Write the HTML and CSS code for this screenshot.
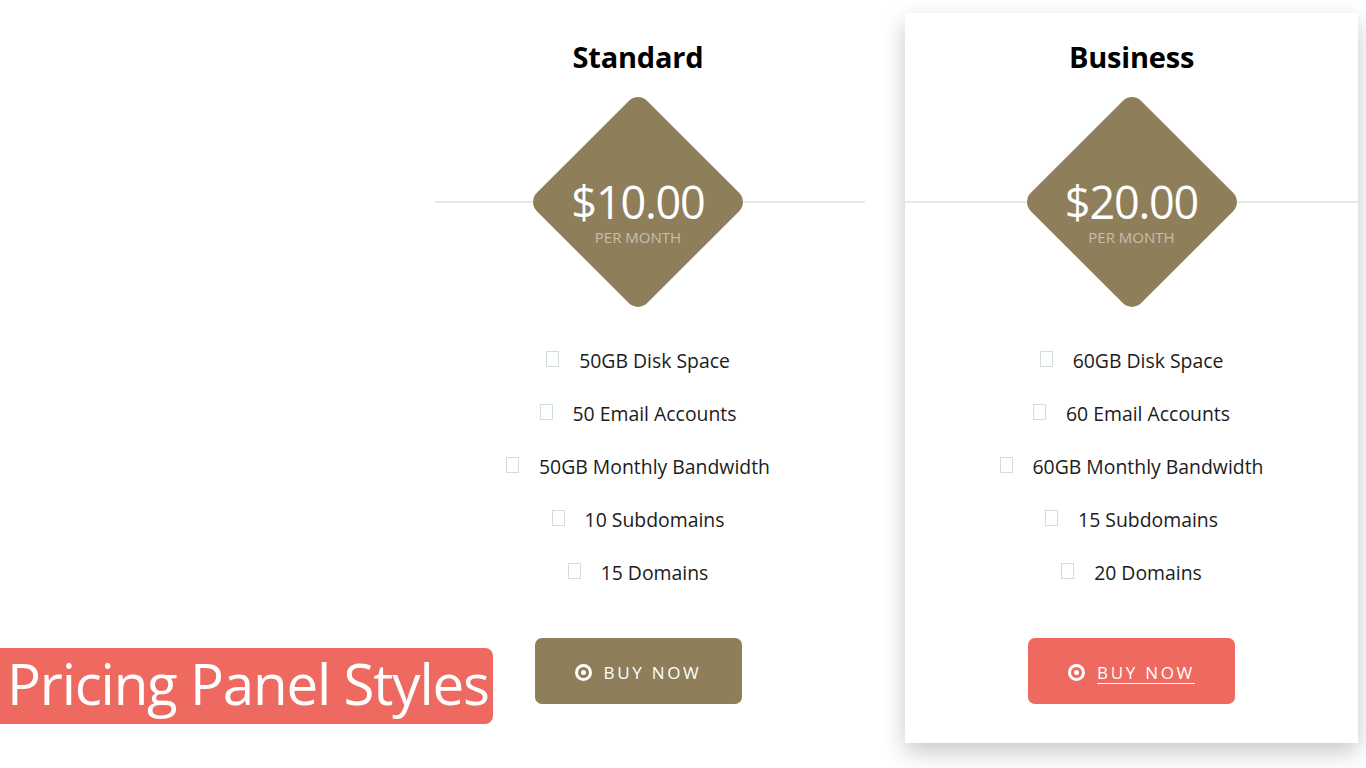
FILE: index.html
```html
<!DOCTYPE html>
<html lang="en">
<head>
<meta charset="utf-8">
<title>Pricing Panel Styles</title>
<link rel="stylesheet" href="styles.css">
</head>
<body>
<main class="pricing">
  <section class="card card-standard">
    <h2 class="card-title">Standard</h2>
    <div class="price-row">
      <div class="diamond">
        <span class="price">$10.00</span>
        <span class="period">PER MONTH</span>
      </div>
    </div>
    <ul class="features">
      <li><span class="box"></span>50GB Disk Space</li>
      <li><span class="box"></span>50 Email Accounts</li>
      <li><span class="box"></span>50GB Monthly Bandwidth</li>
      <li><span class="box"></span>10 Subdomains</li>
      <li><span class="box"></span>15 Domains</li>
    </ul>
    <a class="buy" href="#"><span class="target"></span><span class="buy-text">BUY NOW</span></a>
  </section>
  <section class="card card-business">
    <h2 class="card-title">Business</h2>
    <div class="price-row">
      <div class="diamond">
        <span class="price">$20.00</span>
        <span class="period">PER MONTH</span>
      </div>
    </div>
    <ul class="features">
      <li><span class="box"></span>60GB Disk Space</li>
      <li><span class="box"></span>60 Email Accounts</li>
      <li><span class="box"></span>60GB Monthly Bandwidth</li>
      <li><span class="box"></span>15 Subdomains</li>
      <li><span class="box"></span>20 Domains</li>
    </ul>
    <a class="buy buy-active" href="#"><span class="target"></span><span class="buy-text">BUY NOW</span></a>
  </section>
</main>
<div class="caption">Pricing Panel Styles</div>
</body>
</html>
```

FILE: styles.css
```css
html, body {
  margin: 0;
  padding: 0;
  background: #ffffff;
}

body {
  width: 1366px;
  height: 768px;
  overflow: hidden;
  position: relative;
  font-family: "Open Sans", "Noto Sans", sans-serif;
  color: #1c1c1c;
}

.pricing {
  display: flex;
  align-items: flex-start;
  gap: 40px;
  padding: 13px 0 0 435px;
}

.card {
  box-sizing: border-box;
  background: #ffffff;
  display: flex;
  flex-direction: column;
  align-items: center;
  padding: 24px 0 39px;
}

.card-standard {
  width: 430px;
  padding-right: 24px;
}

.card-business {
  width: 453px;
  box-shadow: 0 9px 22px rgba(0, 0, 0, 0.22);
}

.card-title {
  margin: 0 0 20px;
  font-size: 29px;
  line-height: 40px;
  font-weight: 700;
  color: #000000;
  letter-spacing: -0.2px;
}

.price-row {
  align-self: stretch;
  height: 210px;
  display: flex;
  justify-content: center;
  background: linear-gradient(#e8e8e8, #e8e8e8) no-repeat left 104px / 100% 2px;
}

.card-standard .price-row {
  margin-right: -24px;
  padding-right: 24px;
}

.diamond {
  position: relative;
  width: 210px;
  height: 210px;
  display: flex;
  flex-direction: column;
  align-items: center;
  justify-content: center;
  padding-top: 22px;
  box-sizing: border-box;
  color: #ffffff;
}

.diamond::before {
  content: "";
  position: absolute;
  left: 27px;
  top: 27px;
  width: 156px;
  height: 156px;
  background: #8e7e5a;
  border-radius: 13px;
  transform: rotate(45deg);
}

.price,
.period {
  position: relative;
}

.price {
  font-size: 45px;
  line-height: 44px;
  font-weight: 400;
  letter-spacing: -1.2px;
}

.period {
  font-size: 15px;
  line-height: 18px;
  color: rgba(255, 255, 255, 0.5);
  margin-top: 4px;
}

.features {
  list-style: none;
  margin: 27px 0 0;
  padding: 0;
  display: flex;
  flex-direction: column;
  align-items: center;
}

.features li {
  display: flex;
  align-items: center;
  height: 53px;
  font-size: 19.4px;
  color: #1c1c1c;
}

.box {
  box-sizing: border-box;
  width: 13px;
  height: 16px;
  border: 1px solid #cfe0d5;
  margin-right: 20px;
  position: relative;
  top: -2px;
}

.buy {
  margin-top: 39px;
  box-sizing: border-box;
  width: 207px;
  height: 66px;
  border-radius: 7px;
  background: #8e7e5a;
  color: #ffffff;
  text-decoration: none;
  display: flex;
  align-items: center;
  justify-content: center;
  gap: 12px;
  font-size: 17px;
  letter-spacing: 2.7px;
  padding-top: 2px;
}

.buy-active {
  background: #ee6a60;
}

.buy-active .buy-text {
  text-decoration: underline;
  text-underline-offset: 4px;
}

.target {
  box-sizing: border-box;
  width: 17px;
  height: 17px;
  border: 3px solid #ffffff;
  border-radius: 50%;
  display: flex;
  align-items: center;
  justify-content: center;
}

.target::after {
  content: "";
  width: 5px;
  height: 5px;
  border-radius: 50%;
  background: #ffffff;
}

.caption {
  position: absolute;
  left: 0;
  top: 648px;
  height: 76px;
  width: 493px;
  box-sizing: border-box;
  padding-left: 7px;
  background: #ee6a60;
  border-radius: 0 8px 8px 0;
  color: #ffffff;
  font-size: 56.5px;
  font-weight: 400;
  line-height: 72px;
  letter-spacing: -1.2px;
  white-space: nowrap;
}
```
